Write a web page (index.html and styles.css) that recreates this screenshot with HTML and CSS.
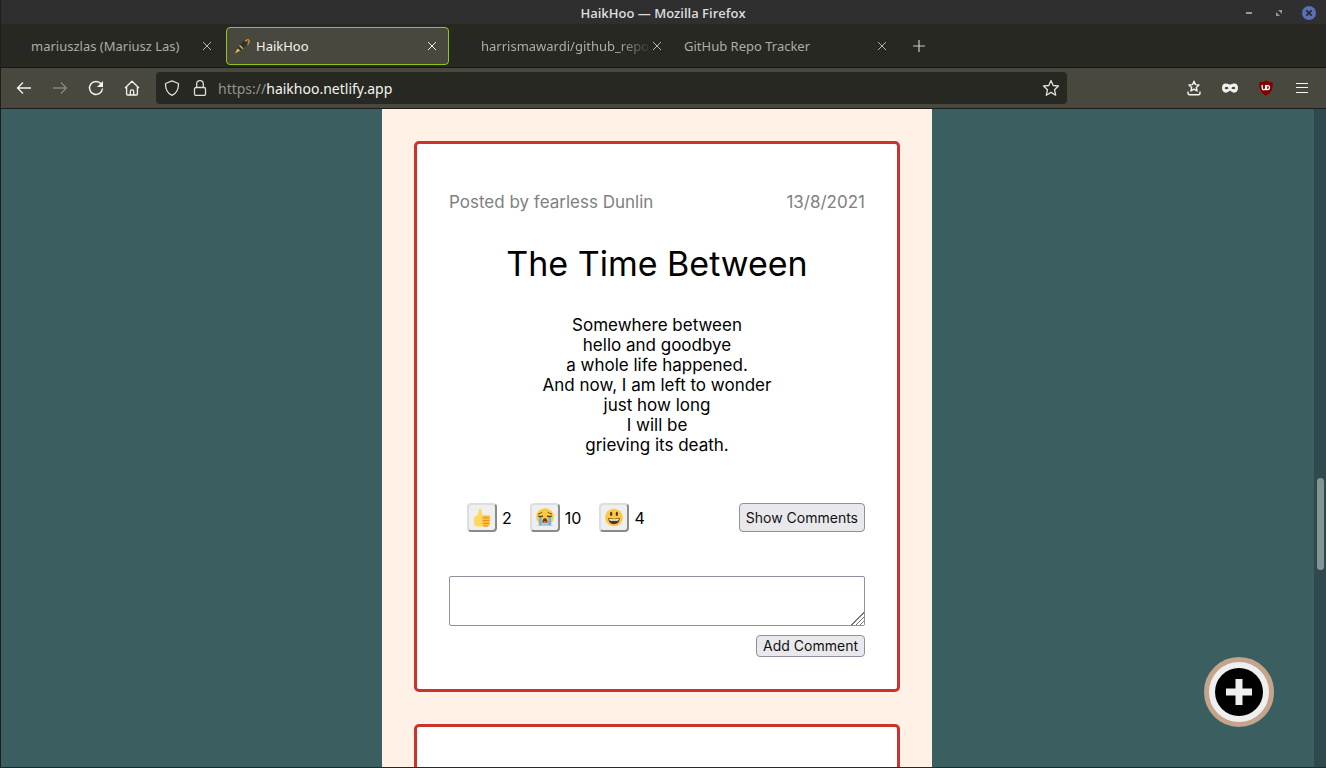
FILE: index.html
```html
<!DOCTYPE html>
<html lang="en">
<head>
<meta charset="utf-8">
<title>HaikHoo</title>
<link rel="stylesheet" href="styles.css">
</head>
<body>
<div class="window">
  <header class="titlebar">
    <span class="titlebar-text">HaikHoo — Mozilla Firefox</span>
    <div class="window-controls">
      <button type="button" aria-label="Minimize"><svg width="14" height="14" viewBox="0 0 14 14"><path d="M4 6h6v2H4z" fill="#999"/></svg></button>
      <button type="button" aria-label="Restore"><svg width="14" height="14" viewBox="0 0 14 14"><path d="M6 4h4v4zM4 6v4h4z" fill="#999"/></svg></button>
      <button type="button" aria-label="Close window"><svg width="14" height="14" viewBox="0 0 14 14"><circle cx="7" cy="7" r="7" fill="#5b6fb8"/><path d="M4.300 4.300l5.400 5.400M9.700 4.300l-5.400 5.400" stroke="#2b2b2e" stroke-width="1.800"/></svg></button>
    </div>
  </header>

  <nav class="tabs" aria-label="Tabs">
    <div class="tab">
      <svg class="favicon" width="16" height="16" viewBox="0 0 16 16"><path d="M5.500 14.500v-2.500C2 12.500 3 9.500 1.800 9M10.500 14.500v-2.500c4-1 4-5 2.500-6.500V3l-2.500 1h-5L3 3v2.500c-1.500 1.500-1.500 5.500 2.500 6.500" fill="none" stroke="#24292f" stroke-width="1.800"/></svg>
      <a class="tab-label" href="#">mariuszlas (Mariusz Las)</a>
      <button type="button" aria-label="Close tab"><svg width="10" height="10" viewBox="0 0 10 10"><path d="M1 1l8 8M9 1L1 9" stroke="#b5b5ad"/></svg></button>
    </div>
    <div class="tab tab-active">
      <svg class="favicon" width="16" height="16" viewBox="0 0 16 16"><path d="M11 3L14 1.500 15.500 3 13.500 7" fill="none" stroke="#d9912b" stroke-width="1.200"/><path d="M9.500 2.500L13.800 5.500 8 12 3.500 13 4.500 8.500z" fill="#2c333b"/><path d="M5.500 7.500l3.500 3.300" stroke="#f0b83c" stroke-width="1.300"/><path d="M3.800 10.500L6 12.500 1 15.500z" fill="#f9c846"/></svg>
      <a class="tab-label" href="#">HaikHoo</a>
      <button type="button" aria-label="Close tab"><svg width="10" height="10" viewBox="0 0 10 10"><path d="M1 1l8 8M9 1L1 9" stroke="#eee"/></svg></button>
    </div>
    <div class="tab">
      <svg class="favicon" width="16" height="16" viewBox="0 0 16 16"><path d="M5.500 14.500v-2.500C2 12.500 3 9.500 1.800 9M10.500 14.500v-2.500c4-1 4-5 2.500-6.500V3l-2.500 1h-5L3 3v2.500c-1.500 1.500-1.500 5.500 2.500 6.500" fill="none" stroke="#24292f" stroke-width="1.800"/></svg>
      <a class="tab-label tab-label-fade" href="#">harrismawardi/github_repo_</a>
      <button type="button" aria-label="Close tab"><svg width="10" height="10" viewBox="0 0 10 10"><path d="M1 1l8 8M9 1L1 9" stroke="#b5b5ad"/></svg></button>
    </div>
    <div class="tab">
      <a class="tab-label" href="#">GitHub Repo Tracker</a>
      <button type="button" aria-label="Close tab"><svg width="10" height="10" viewBox="0 0 10 10"><path d="M1 1l8 8M9 1L1 9" stroke="#b5b5ad"/></svg></button>
    </div>
    <button class="new-tab" type="button" aria-label="New tab"><svg width="12" height="12" viewBox="0 0 12 12"><path d="M6 0v12M0 6h12" stroke="#c8c8c0" stroke-width="1.200"/></svg></button>
  </nav>

  <div class="toolbar">
    <div class="nav-buttons">
      <button type="button" aria-label="Back"><svg width="16" height="16" viewBox="0 0 16 16"><path d="M15 8H1.700M7 2.500L1.500 8 7 13.500" fill="none" stroke="#f4f4f0" stroke-width="1.300"/></svg></button>
      <button type="button" aria-label="Forward" disabled><svg width="16" height="16" viewBox="0 0 16 16"><path d="M1 8h13.300M9 2.500L14.500 8 9 13.500" fill="none" stroke="#85857c" stroke-width="1.300"/></svg></button>
      <button type="button" aria-label="Reload"><svg width="16" height="16" viewBox="0 0 16 16"><path d="M13.200 4A6.500 6.500 0 1 0 14.500 8.500" fill="none" stroke="#f4f4f0" stroke-width="1.400"/><path d="M15 1v6H9z" fill="#f4f4f0"/></svg></button>
      <button type="button" aria-label="Home"><svg width="16" height="16" viewBox="0 0 16 16"><path d="M1 8l7-6.800L15 8M2.600 7v7q0 1 1 1h8.800q1 0 1-1V7M6.300 15v-3.500a1.700 1.700 0 0 1 3.400 0V15" fill="none" stroke="#f4f4f0" stroke-width="1.300" stroke-linejoin="round"/></svg></button>
    </div>
    <div class="address">
      <div class="address-icons">
        <svg width="16" height="16" viewBox="0 0 16 16"><path d="M8 .8l6.500 2.700C14.600 9 12.500 13.300 8 15.400 3.500 13.300 1.400 9 1.500 3.500z" fill="none" stroke="#ddd" stroke-width="1.300" stroke-linejoin="round"/></svg>
        <svg width="16" height="16" viewBox="0 0 16 16"><rect x="2.500" y="7.500" width="11" height="8" rx="1.500" fill="none" stroke="#ddd" stroke-width="1.300"/><path d="M4.700 7.500V4a3.300 3.300 0 0 1 6.600 0v3.500" fill="none" stroke="#ddd" stroke-width="1.300"/></svg>
      </div>
      <a class="url" href="#"><span class="url-scheme">https://</span>haikhoo.netlify.app</a>
      <button type="button" aria-label="Bookmark this page"><svg width="18" height="18" viewBox="0 0 18 18"><path d="M9 1.500l2.200 5 5.300.500-4 3.700 1.200 5.500L9 13.400l-4.700 2.800 1.200-5.500-4-3.700 5.300-.5z" fill="none" stroke="#e0e0dc" stroke-width="1.300" stroke-linejoin="round"/></svg></button>
    </div>
    <div class="extensions">
      <button type="button" aria-label="Bookmarks"><svg width="16" height="16" viewBox="0 0 16 16"><path d="M8 1.200l1.400 3.400 3.600.3-2.700 2.500.8 3.600L8 9.200 4.900 11l.8-3.600L3 4.900l3.600-.3z" fill="none" stroke="#f4f4f0" stroke-width="1.400" stroke-linejoin="round"/><path d="M2 11.500V13q0 1.800 1.800 1.800h8.400Q14 14.800 14 13v-1.500" fill="none" stroke="#f4f4f0" stroke-width="1.400"/></svg></button>
      <button type="button" aria-label="Private mask"><svg width="16" height="16" viewBox="0 0 16 16"><path fill-rule="evenodd" d="M4 3.500C6 3.500 7 4.600 8 4.600s2-1.100 4-1.100c3 0 4 2 4 4.500s-1.300 4.700-4 4.700c-2 0-3-1.900-4-1.900s-2 1.900-4 1.900C1.300 12.700 0 10.500 0 8s1-4.500 4-4.500zM2.500 8.200C3.500 9.700 5.500 9.700 6.600 8.200 5.500 6.400 3.500 6.400 2.500 8.200zM9.400 8.200C10.500 9.700 12.500 9.700 13.500 8.200 12.500 6.400 10.500 6.400 9.400 8.200z" fill="#f4f0f0"/></svg></button>
      <button type="button" aria-label="Content blocker"><svg width="16" height="16" viewBox="0 0 16 16"><path d="M8 .5Q11 2 14.700 2.300C15 9.500 13.500 12.500 8 15.700 2.500 12.500 1 9.500 1.300 2.300Q5 2 8 .5z" fill="#800000"/><path d="M4.200 5v3q0 1.800 1.700 1.800T7.600 8V5M8.500 9.600V5.600h1a2 2 0 0 1 0 4H7.500" fill="none" stroke="#fff" stroke-width="1.300"/></svg></button>
      <button type="button" aria-label="Menu"><svg width="16" height="16" viewBox="0 0 16 16"><path d="M2 3.500h12M2 7.500h12M2 12.500h12" stroke="#f4f4f0" stroke-width="1.200"/></svg></button>
    </div>
  </div>

  <div class="viewport">
    <main class="feed">
      <article class="card">
        <div class="card-meta"><span>Posted by fearless Dunlin</span><time datetime="2021-08-13">13/8/2021</time></div>
        <h2>The Time Between</h2>
        <p class="poem">Somewhere between<br>hello and goodbye<br>a whole life happened.<br>And now, I am left to wonder<br>just how long<br>I will be<br>grieving its death.</p>
        <div class="actions">
          <div class="reactions">
            <div class="reaction">
              <button type="button" aria-label="Thumbs up"><svg width="20" height="20" viewBox="0 0 20 20"><path d="M1.500 9.500Q4.500 9.500 6.500 5V2Q6.500.8 8 .8q2 .4 2 3V8h7q1.500.3 1.500 2v6.500q-.8 3-4 3H5q-3.500-.5-3.500-4z" fill="#ffd75e"/><path d="M10.500 8h6.800q1.500.3 1.200 2.400l-.7 7q-.4 2-2 2h-3.600q-2-.3-1.700-2z" fill="#ffc233"/><path d="M10.500 10.300h7M10.500 13.300h7M11 16.300h6.500M12 19h4" stroke="#e7843c" stroke-width="1"/></svg></button><span>2</span>
            </div>
            <div class="reaction">
              <button type="button" aria-label="Crying"><svg width="20" height="20" viewBox="0 0 20 20"><circle cx="10" cy="9.500" r="9.300" fill="#fdc842"/><path d="M.8 18.500Q10 15 19.200 18.500z" fill="#80c7f2"/><path d="M3.800 9h2.600v9.300H3.500zM13.600 9h2.600l.3 9.300h-2.900z" fill="#64b5f6"/><path d="M2.800 6.200Q5.500 6 7 4.300M17.200 6.200Q14.500 6 13 4.300" fill="none" stroke="#67451f" stroke-width="1"/><path d="M3 8.300q2.500 1.300 4.800 0M12.200 8.300q2.300 1.300 4.800 0" fill="none" stroke="#513817" stroke-width="1.300"/><path d="M7.300 15.500Q7.500 10.800 10 10.800t2.700 4.700z" fill="#6d3525"/><path d="M8.200 14.800q1.800-2 3.600 0v.700H8.200z" fill="#ef6b75"/></svg></button><span>10</span>
            </div>
            <div class="reaction">
              <button type="button" aria-label="Smile"><svg width="20" height="20" viewBox="0 0 20 20"><circle cx="10" cy="10" r="9.300" fill="#fdc842"/><ellipse cx="7" cy="6.200" rx="1.200" ry="2.200" fill="#493521"/><ellipse cx="13" cy="6.200" rx="1.200" ry="2.200" fill="#493521"/><path d="M3.800 10.500q6.200 1.700 12.400 0Q15.500 17 10 17t-6.200-6.500z" fill="#513521"/><path d="M4.800 11.300q5.200 1.200 10.400 0-.3 1.900-1.500 2.100H6.300Q5 13.200 4.800 11.300z" fill="#fff"/></svg></button><span>4</span>
            </div>
          </div>
          <button class="button" type="button">Show Comments</button>
        </div>
        <form class="comment-form">
          <textarea aria-label="Comment"></textarea>
          <button class="button" type="button">Add Comment</button>
        </form>
      </article>
      <article class="card"></article>
    </main>
    <div class="scrollbar"><div class="scroll-thumb"></div></div>
    <button class="add-post" type="button" aria-label="Add a haiku"><svg width="48" height="48" viewBox="0 0 48 48"><circle cx="24" cy="24" r="24" fill="#000"/><path d="M20.500 11h7v9.500H37v7h-9.500V37h-7v-9.500H11v-7h9.500z" fill="#efefef"/></svg></button>
  </div>
</div>
</body>
</html>
```
FILE: styles.css
```css
* { box-sizing: border-box; }
body {
  margin: 0;
  font-family: "Noto Sans", sans-serif;
  font-size: 13px;
}
button { font: inherit; }
a { color: inherit; text-decoration: none; }
svg { display: block; flex: none; }

.window {
  position: relative;
  height: 100vh;
  display: flex;
  flex-direction: column;
  overflow: hidden;
  border-bottom: 1px solid #26282c;
}
/* window edge, drawn over the content */
.window::before {
  content: "";
  position: absolute;
  z-index: 1;
  top: 0;
  bottom: 0;
  left: 0;
  width: 1px;
  background: #1e1f1b;
}
.titlebar button, .tabs button, .toolbar button {
  display: flex;
  padding: 0;
  border: 0;
  background: none;
}

.titlebar {
  flex: none;
  height: 24px;
  display: grid;
  grid-template-columns: 1fr auto 1fr;
  align-items: center;
  padding-top: 2px;
  background: #2f2f2f;
  color: #dcdcdc;
}
.titlebar-text {
  grid-column: 2;
  font-family: "Open Sans", sans-serif;
  font-weight: 600;
}
.window-controls {
  display: flex;
  justify-content: flex-end;
  gap: 16px;
  padding-right: 10px;
}

.tabs {
  flex: none;
  height: 44px;
  display: flex;
  align-items: center;
  padding: 1px 0 0 1px;
  background: #272822;
  border-bottom: 1px solid #161713;
  color: #adada5;
}
.tab {
  width: 223px;
  height: 38px;
  margin-right: 2px;
  display: flex;
  align-items: center;
  padding: 0 11px 0 7px;
  border: 1px solid transparent;
  border-radius: 4px;
}
.tab-active {
  background: #49483e;
  border-color: #91c61f;
  color: #f4f4f0;
}
.favicon { margin-right: 6px; }
.tab-label {
  flex: 1;
  min-width: 0;
  overflow: hidden;
  white-space: nowrap;
}
.tab-label-fade { mask-image: linear-gradient(to left, transparent, #000 32px); }
.tabs .new-tab { margin-left: 12px; }

.toolbar {
  flex: none;
  height: 41px;
  display: flex;
  align-items: center;
  background: #49483e;
  border-bottom: 1px solid #1e1f1b;
}
.nav-buttons {
  display: flex;
  gap: 20px;
  padding: 0 16px;
}
.address {
  flex: 1;
  max-width: 911px;
  height: 32px;
  margin-right: 16px;
  display: flex;
  align-items: center;
  gap: 10px;
  padding: 0 7px 0 8px;
  border-radius: 4px;
  background: #272822;
}
.address-icons {
  display: flex;
  gap: 12px;
}
.url {
  flex: 1;
  font-size: 14px;
  color: #f4f4f0;
}
.url-scheme { color: #92938c; }
.extensions {
  display: flex;
  gap: 20px;
  margin-left: auto;
  padding-right: 16px;
}

.viewport {
  flex: 1;
  min-height: 0;
  position: relative;
  display: flex;
  background: #3b5e60;
  overflow: hidden;
  font-family: Inter, sans-serif;
}
.feed {
  width: 550px;
  margin: 0 auto;
  padding: 32px;
  background: #fff1e6;
}
.card {
  min-height: 200px;
  margin-bottom: 32px;
  padding: 48px 32px 32px;
  border: 3px solid #cb342c;
  border-radius: 5px;
  background: #fff;
  font-size: 17px;
  line-height: 20px;
  color: #000;
}
.card-meta {
  display: flex;
  justify-content: space-between;
  color: #808080;
}
.card h2 {
  margin: 32px 0 31px;
  font-size: 34px;
  font-weight: 400;
  line-height: 40px;
  text-align: center;
}
.poem {
  margin: 0 0 48px;
  text-align: center;
}
.actions {
  display: flex;
  justify-content: space-between;
  margin-bottom: 44px;
}
.reactions {
  display: flex;
  gap: 18px;
  padding-left: 18px;
}
.reaction {
  display: flex;
  align-items: center;
  gap: 5px;
  font-size: 16px;
}
.reaction button {
  padding: 3px;
  border: 2px outset #dedede;
  border-radius: 4px;
  background: #efefef;
}
.reaction svg { width: 20px; height: 19px; }
.button {
  padding: 0 6px;
  border: 1px solid #8f8f9d;
  border-radius: 4px;
  background: #e9e9ed;
  font-size: 14px;
  line-height: 20px;
  color: #111;
}
.comment-form {
  display: flex;
  flex-direction: column;
  align-items: flex-end;
  gap: 9px;
}
.comment-form textarea {
  width: 100%;
  height: 50px;
  border: 1px solid #8f8f9d;
  border-radius: 2px;
  background: #fff;
  resize: vertical;
}
.comment-form textarea::-webkit-resizer {
  background:
    linear-gradient(135deg, #fff 50%, transparent 50%),
    repeating-linear-gradient(135deg, #777 0 1px, #fff 1px 3px);
}
.scrollbar {
  flex: none;
  width: 12px;
  padding: 369px 2px 0 3px;
  background: #30494d;
}
.scroll-thumb {
  height: 92px;
  border-radius: 4px;
  background: #839594;
}
.add-post {
  position: absolute;
  right: 52px;
  bottom: 40px;
  width: 70px;
  height: 70px;
  display: flex;
  align-items: center;
  justify-content: center;
  padding: 0;
  border: 5px solid #c5a48c;
  border-radius: 50%;
  background: #efefef;
}
```
